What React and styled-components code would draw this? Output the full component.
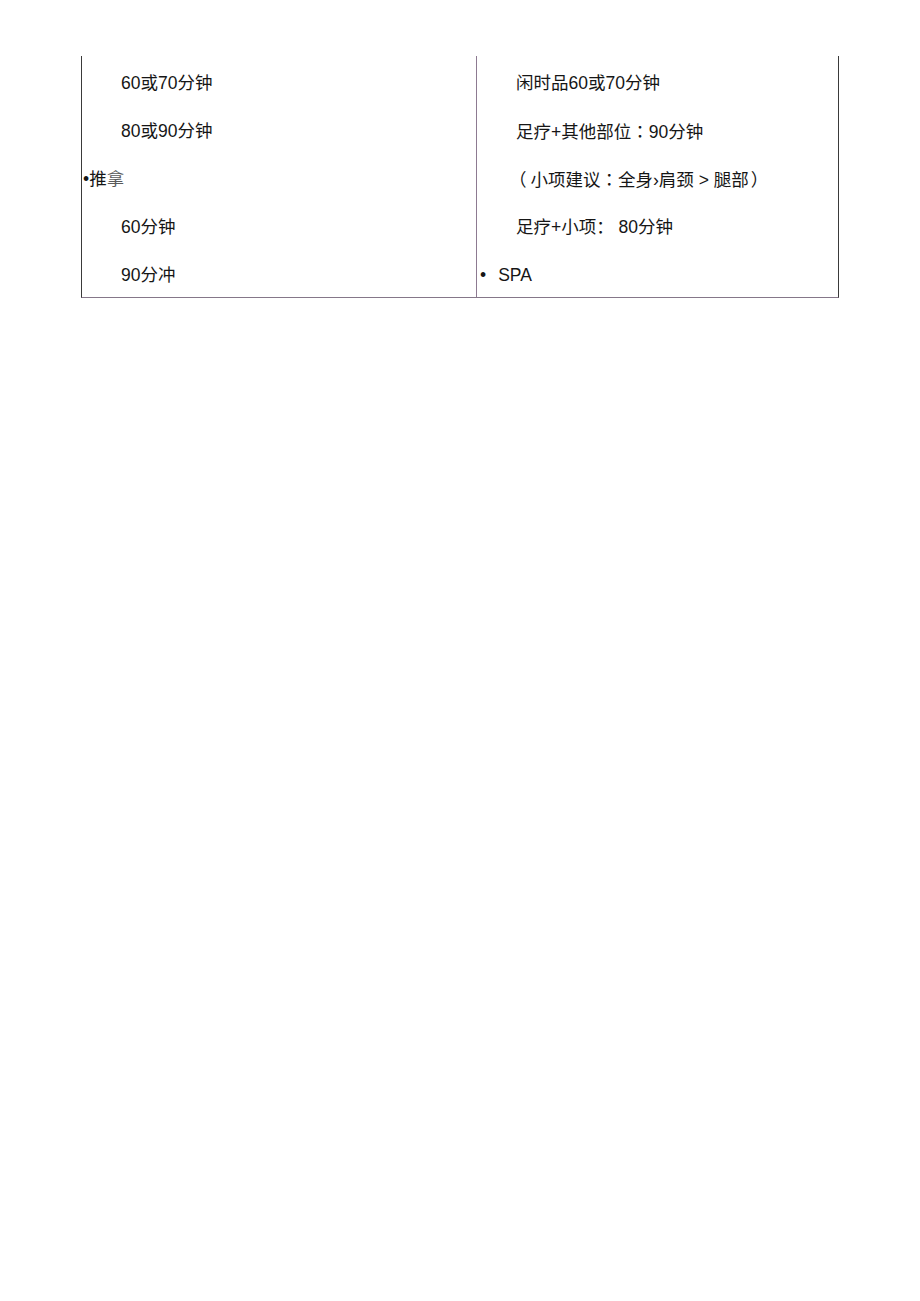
import styled, { createGlobalStyle } from "styled-components";

const GlobalStyle = createGlobalStyle`
  body {
    margin: 0;
    background: #ffffff;
    font-family: "Liberation Sans", "Noto Sans CJK SC", sans-serif;
    color: #161616;
  }
`;

const Page = styled.div`
  width: 920px;
  min-height: 1301px;
  padding: 56px 0 0 81px;
  box-sizing: border-box;
`;

const Table = styled.div`
  display: grid;
  grid-template-columns: 394px 362px;
  width: 758px;
  border-left: 1px solid #3a3a3a;
  border-right: 1px solid #3a3a3a;
  border-bottom: 1px solid #857789;
  box-sizing: border-box;
`;

const Cell = styled.div`
  display: flex;
  flex-direction: column;
  padding-top: 1px;
  border-left: ${(p) => (p.divider ? "1px solid #8d7a91" : "none")};
`;

const Line = styled.div`
  height: 48px;
  box-sizing: border-box;
  padding-top: 4px;
  line-height: 44px;
  font-size: 17.5px;
  white-space: nowrap;
  padding-left: ${(p) => p.indent}px;
`;

const Dot = styled.span`
  display: inline-block;
  margin-right: ${(p) => p.gap}px;
`;

// centred full-width punctuation, as in the source document
const Punct = styled.span`
  font-family: "Noto Sans CJK TC", sans-serif;
  margin: 0 ${(p) => p.right || 0}px 0 ${(p) => p.left || 0}px;
`;

const Faded = styled.span`
  color: #5a5a5a;
`;

export default function App() {
  return (
    <Page>
      <GlobalStyle />
      <Table>
        <Cell>
          <Line indent={39}>60或70分钟</Line>
          <Line indent={39}>80或90分钟</Line>
          <Line indent={1}>
            <Dot gap={0}>•</Dot>推<Faded>拿</Faded>
          </Line>
          <Line indent={39}>60分钟</Line>
          <Line indent={39}>90分冲</Line>
        </Cell>
        <Cell divider>
          <Line indent={39}>闲时品60或70分钟</Line>
          <Line indent={39}>
            足疗+其他部位<Punct>：</Punct>90分钟
          </Line>
          <Line indent={32}>
            <Punct right={4}>（</Punct>小项建议<Punct>：</Punct>全身›肩颈 &gt; 腿部<Punct left={2}>）</Punct>
          </Line>
          <Line indent={39}>足疗+小项： 80分钟</Line>
          <Line indent={3}>
            <Dot gap={12}>•</Dot>SPA
          </Line>
        </Cell>
      </Table>
    </Page>
  );
}
